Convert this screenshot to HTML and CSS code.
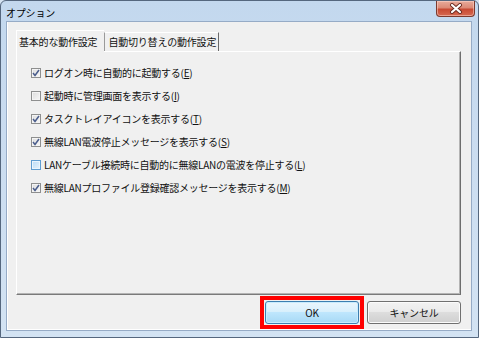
FILE: index.html
```html
<!DOCTYPE html>
<html lang="ja">
<head>
<meta charset="utf-8">
<title>オプション</title>
<link rel="stylesheet" href="styles.css">
</head>
<body>
<div class="window">
  <div class="titlebar">
    <span class="title">オプション</span>
    <div class="close">
      <svg width="14" height="11" viewBox="0 0 14 11"><path d="M3 2 L11 9 M11 2 L3 9" stroke="#6b2a20" stroke-width="4" stroke-linecap="round"/><path d="M3 2 L11 9 M11 2 L3 9" stroke="#ffffff" stroke-width="2.2" stroke-linecap="round"/></svg>
    </div>
  </div>
  <div class="client">
    <div class="tabs">
      <div class="tab active">基本的な動作設定</div>
      <div class="tab">自動切り替えの動作設定</div>
    </div>
    <div class="panel">
      <ul class="options">
        <li class="option"><span class="cb checked"><svg width="8" height="8" viewBox="0 0 8 8"><path d="M1 4 L3 6.5 L7 1" fill="none" stroke="#4a5d8c" stroke-width="1.5"/></svg></span><span>ログオン時に自動的に起動する(<u>E</u>)</span></li>
        <li class="option"><span class="cb"></span><span>起動時に管理画面を表示する(<u>I</u>)</span></li>
        <li class="option"><span class="cb checked"><svg width="8" height="8" viewBox="0 0 8 8"><path d="M1 4 L3 6.5 L7 1" fill="none" stroke="#4a5d8c" stroke-width="1.5"/></svg></span><span>タスクトレイアイコンを表示する(<u>T</u>)</span></li>
        <li class="option"><span class="cb checked"><svg width="8" height="8" viewBox="0 0 8 8"><path d="M1 4 L3 6.5 L7 1" fill="none" stroke="#4a5d8c" stroke-width="1.5"/></svg></span><span>無線LAN電波停止メッセージを表示する(<u>S</u>)</span></li>
        <li class="option"><span class="cb hover"></span><span>LANケーブル接続時に自動的に無線LANの電波を停止する(<u>L</u>)</span></li>
        <li class="option"><span class="cb checked"><svg width="8" height="8" viewBox="0 0 8 8"><path d="M1 4 L3 6.5 L7 1" fill="none" stroke="#4a5d8c" stroke-width="1.5"/></svg></span><span>無線LANプロファイル登録確認メッセージを表示する(<u>M</u>)</span></li>
      </ul>
    </div>
    <div class="actions">
      <div class="highlight"><button class="btn default">OK</button></div>
      <button class="btn">キャンセル</button>
    </div>
  </div>
</div>
</body>
</html>
```
FILE: styles.css
```css
* { box-sizing: border-box; }
html, body {
  margin: 0;
  padding: 0;
  width: 479px;
  height: 338px;
  overflow: hidden;
  background: #d5e3f2;
  font-family: "Noto Sans CJK JP", "Noto Sans", sans-serif;
  font-size: 10px;
  color: #111;
}
.window {
  width: 479px;
  height: 338px;
  border: 1px solid #55677e;
  border-radius: 6px 6px 0 0;
  background: linear-gradient(#c3d8ee, #cadcf0 40%, #d3e3f3);
  padding: 0 6px 6px 5px;
  display: flex;
  flex-direction: column;
}
.titlebar {
  height: 21px;
  display: flex;
  align-items: flex-start;
  justify-content: space-between;
}
.title {
  margin-top: 4px;
  font-size: 10px;
  letter-spacing: -0.2px;
  color: #000;
}
.close {
  width: 39px;
  height: 16px;
  margin-right: -3px;
  border: 1px solid #7c3a2e;
  border-top: none;
  border-radius: 0 0 4px 4px;
  background: linear-gradient(#e8ab9b, #dc8a76 45%, #c84a33 55%, #d66a52);
  box-shadow: inset 0 0 0 1px rgba(255, 220, 210, 0.5);
  display: flex;
  align-items: center;
  justify-content: center;
}
.client {
  flex: 1;
  background: #f0f0f0;
  border: 1px solid #96abc6;
  box-shadow: inset 1px 0 0 #ffffff, inset 0 -1px 0 #ffffff;
  padding: 8px 10px 1px 9px;
  display: flex;
  flex-direction: column;
}
.tabs {
  display: flex;
  align-items: flex-end;
  height: 21px;
}
.tab {
  height: 19px;
  line-height: 18px;
  letter-spacing: -0.2px;
  white-space: nowrap;
  border-top: 1px solid #ffffff;
  border-left: 1px solid #9a9a9a;
  border-right: 1px solid #6a6a6a;
  padding: 0 2px 0 3px;
}
.tab.active {
  height: 22px;
  line-height: 22px;
  border-left: 1px solid #ffffff;
  border-right: none;
  padding: 0 7px 0 2px;
  margin-bottom: -1px;
  background: #f0f0f0;
  position: relative;
}
.panel {
  height: 244px;
  border-top: 1px solid #ffffff;
  border-left: 1px solid #ffffff;
  border-right: 1px solid #6e6e6e;
  border-bottom: 1px solid #7a7a7a;
  box-shadow: inset -1px -1px 0 #b4b4b4;
  padding: 9px 0 0 14px;
}
.options {
  list-style: none;
  margin: 0;
  padding: 0;
}
.option {
  height: 23px;
  display: flex;
  align-items: center;
  gap: 3px;
  letter-spacing: -0.25px;
  white-space: nowrap;
}
.option u { text-decoration: underline; text-underline-offset: 1px; }
.cb {
  width: 10px;
  height: 10px;
  flex: none;
  border: 1px solid #8e8f8f;
  background: linear-gradient(135deg, #dcdcdc, #f8f8f8);
  box-shadow: inset 0 0 0 1px #f4f4f4;
  display: flex;
  align-items: center;
  justify-content: center;
}
.cb.hover {
  border-color: #5f9dd0;
  background: linear-gradient(135deg, #b9dcf6, #e6f3fc);
  box-shadow: inset 0 0 0 1px #e9f5fd;
}
.actions {
  height: 34px;
  display: flex;
  align-items: center;
  justify-content: flex-end;
  gap: 3px;
}
.highlight {
  border: 4px solid #ff0000;
  padding: 1px;
}
.btn {
  width: 94px;
  height: 23px;
  margin: 0;
  font-family: "Noto Sans CJK JP", "Noto Sans", sans-serif;
  font-size: 10px;
  letter-spacing: -0.2px;
  color: #111;
  border: 1px solid #707070;
  border-radius: 3px;
  background: linear-gradient(#f2f2f2, #ebebeb 45%, #dddddd 50%, #cfcfcf);
  box-shadow: inset 0 0 0 1px #fbfbfb;
  padding: 0;
}
.btn.default {
  border-color: #3c7fb1;
  background: linear-gradient(#eaf6fd, #d9f0fc 45%, #bee6fd 50%, #a7d9f5);
  box-shadow: inset 0 0 0 1px #c9ecfd;
}
```
